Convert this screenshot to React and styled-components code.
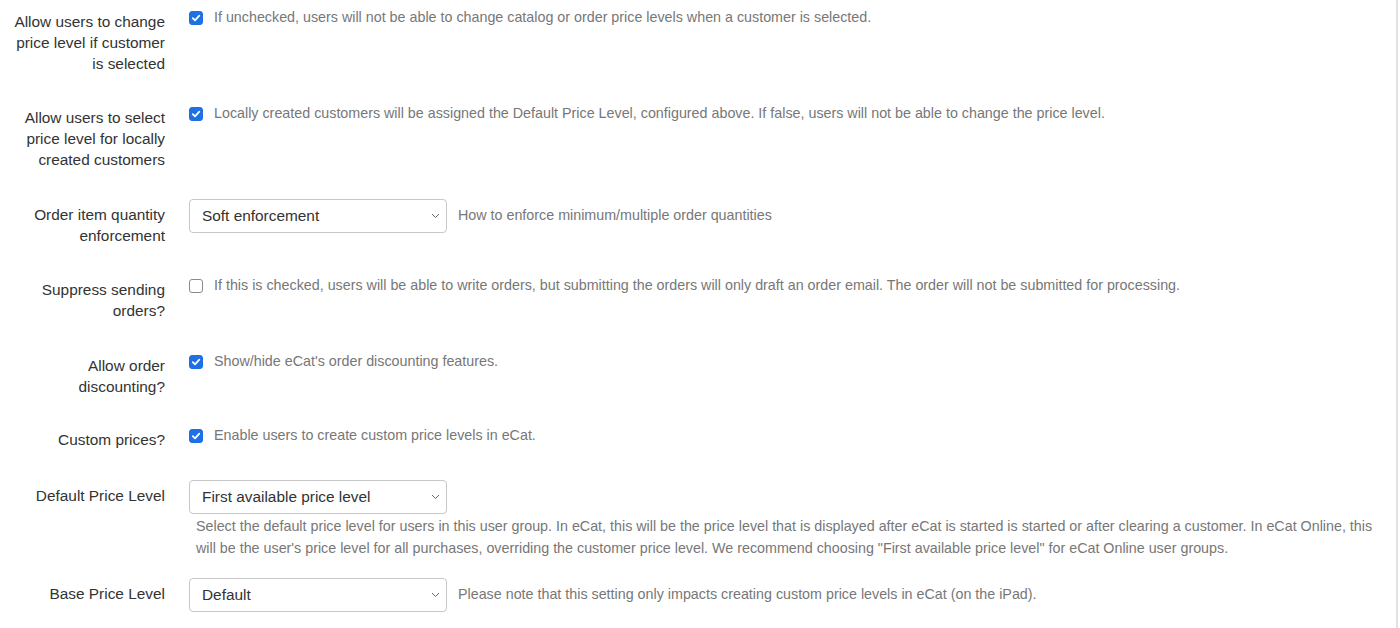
import React from "react";
import styled, { createGlobalStyle } from "styled-components";

const Global = createGlobalStyle`
  html, body { margin: 0; padding: 0; background: #fff; }
  body { font-family: "Liberation Sans", Arial, Helvetica, sans-serif; color: #333; }
`;

const Panel = styled.div`
  width: 1398px;
  min-height: 628px;
  border-right: 2px solid #e2e2e2;
  padding-top: 6px;
  box-sizing: border-box;
`;

const Row = styled.div`
  display: grid;
  grid-template-columns: 165px 1fr;
  column-gap: 24px;
  margin-bottom: ${(p) => p.$gap ?? 28}px;
`;

const Label = styled.div`
  text-align: right;
  font-size: 15.4px;
  line-height: 21px;
  padding-top: 5px;
  padding-left: 10px;
  color: #333;
`;

const Controls = styled.div`
  display: flex;
  flex-direction: column;
  align-items: flex-start;
`;

const Inline = styled.div`
  display: flex;
  align-items: center;
  gap: 11px;
  min-height: ${(p) => (p.$select ? 34 : 24)}px;
`;

const Help = styled.span`
  font-size: 14.3px;
  line-height: 21.5px;
  color: #777;
`;

const HelpBlock = styled.p`
  margin: 0;
  padding: 1px 8px 0 7px;
  font-size: 14.3px;
  line-height: 22px;
  color: #777;
`;

const Box = styled.span`
  flex: none;
  width: 14px;
  height: 14px;
  box-sizing: border-box;
  border-radius: 3px;
  display: inline-flex;
  align-items: center;
  justify-content: center;
  background: ${(p) => (p.$checked ? "#1f6fe5" : "#fff")};
  border: 1px solid ${(p) => (p.$checked ? "#1f6fe5" : "#8a8a8a")};
`;

const SelectBox = styled.div`
  flex: none;
  width: 258px;
  height: 34px;
  box-sizing: border-box;
  border: 1px solid #c8c8c8;
  border-radius: 4px;
  display: flex;
  align-items: center;
  justify-content: space-between;
  padding: 0 6px 0 12px;
  font-size: 15.4px;
  color: #333;
  background: #fff;
`;

const Checkbox = ({ checked }) => (
  <Box $checked={checked}>
    {checked && (
      <svg width="10" height="10" viewBox="0 0 10 10">
        <path d="M1.8 5.2 L4 7.4 L8.3 2.6" fill="none" stroke="#fff" strokeWidth="1.8" strokeLinecap="round" strokeLinejoin="round" />
      </svg>
    )}
  </Box>
);

const Select = ({ value }) => (
  <SelectBox>
    <span>{value}</span>
    <svg width="9" height="6" viewBox="0 0 9 6">
      <path d="M1 1 L4.5 4.5 L8 1" fill="none" stroke="#666" strokeWidth="1" />
    </svg>
  </SelectBox>
);

const CheckRow = ({ label, checked, help, gap }) => (
  <Row $gap={gap}>
    <Label>{label}</Label>
    <Controls>
      <Inline>
        <Checkbox checked={checked} />
        <Help>{help}</Help>
      </Inline>
    </Controls>
  </Row>
);

export default function App() {
  return (
    <>
      <Global />
      <Panel>
        <CheckRow
          label="Allow users to change price level if customer is selected"
          checked
          help="If unchecked, users will not be able to change catalog or order price levels when a customer is selected."
        />
        <CheckRow
          label="Allow users to select price level for locally created customers"
          checked
          help="Locally created customers will be assigned the Default Price Level, configured above. If false, users will not be able to change the price level."
          gap={29}
        />
        <Row>
          <Label>Order item quantity enforcement</Label>
          <Controls>
            <Inline $select>
              <Select value="Soft enforcement" />
              <Help>How to enforce minimum/multiple order quantities</Help>
            </Inline>
          </Controls>
        </Row>
        <CheckRow
          label="Suppress sending orders?"
          checked={false}
          help="If this is checked, users will be able to write orders, but submitting the orders will only draft an order email. The order will not be submitted for processing."
          gap={29}
        />
        <CheckRow
          label="Allow order discounting?"
          checked
          help="Show/hide eCat's order discounting features."
          gap={27}
        />
        <CheckRow
          label="Custom prices?"
          checked
          help="Enable users to create custom price levels in eCat."
          gap={30}
        />
        <Row $gap={19}>
          <Label>Default Price Level</Label>
          <Controls>
            <Select value="First available price level" />
            <HelpBlock>
              Select the default price level for users in this user group. In eCat, this will be the price level that is displayed after eCat is started is started or after clearing a customer. In eCat Online, this will be the user's price level for all purchases, overriding the customer price level. We recommend choosing "First available price level" for eCat Online user groups.
            </HelpBlock>
          </Controls>
        </Row>
        <Row>
          <Label>Base Price Level</Label>
          <Controls>
            <Inline $select>
              <Select value="Default" />
              <Help>Please note that this setting only impacts creating custom price levels in eCat (on the iPad).</Help>
            </Inline>
          </Controls>
        </Row>
      </Panel>
    </>
  );
}
